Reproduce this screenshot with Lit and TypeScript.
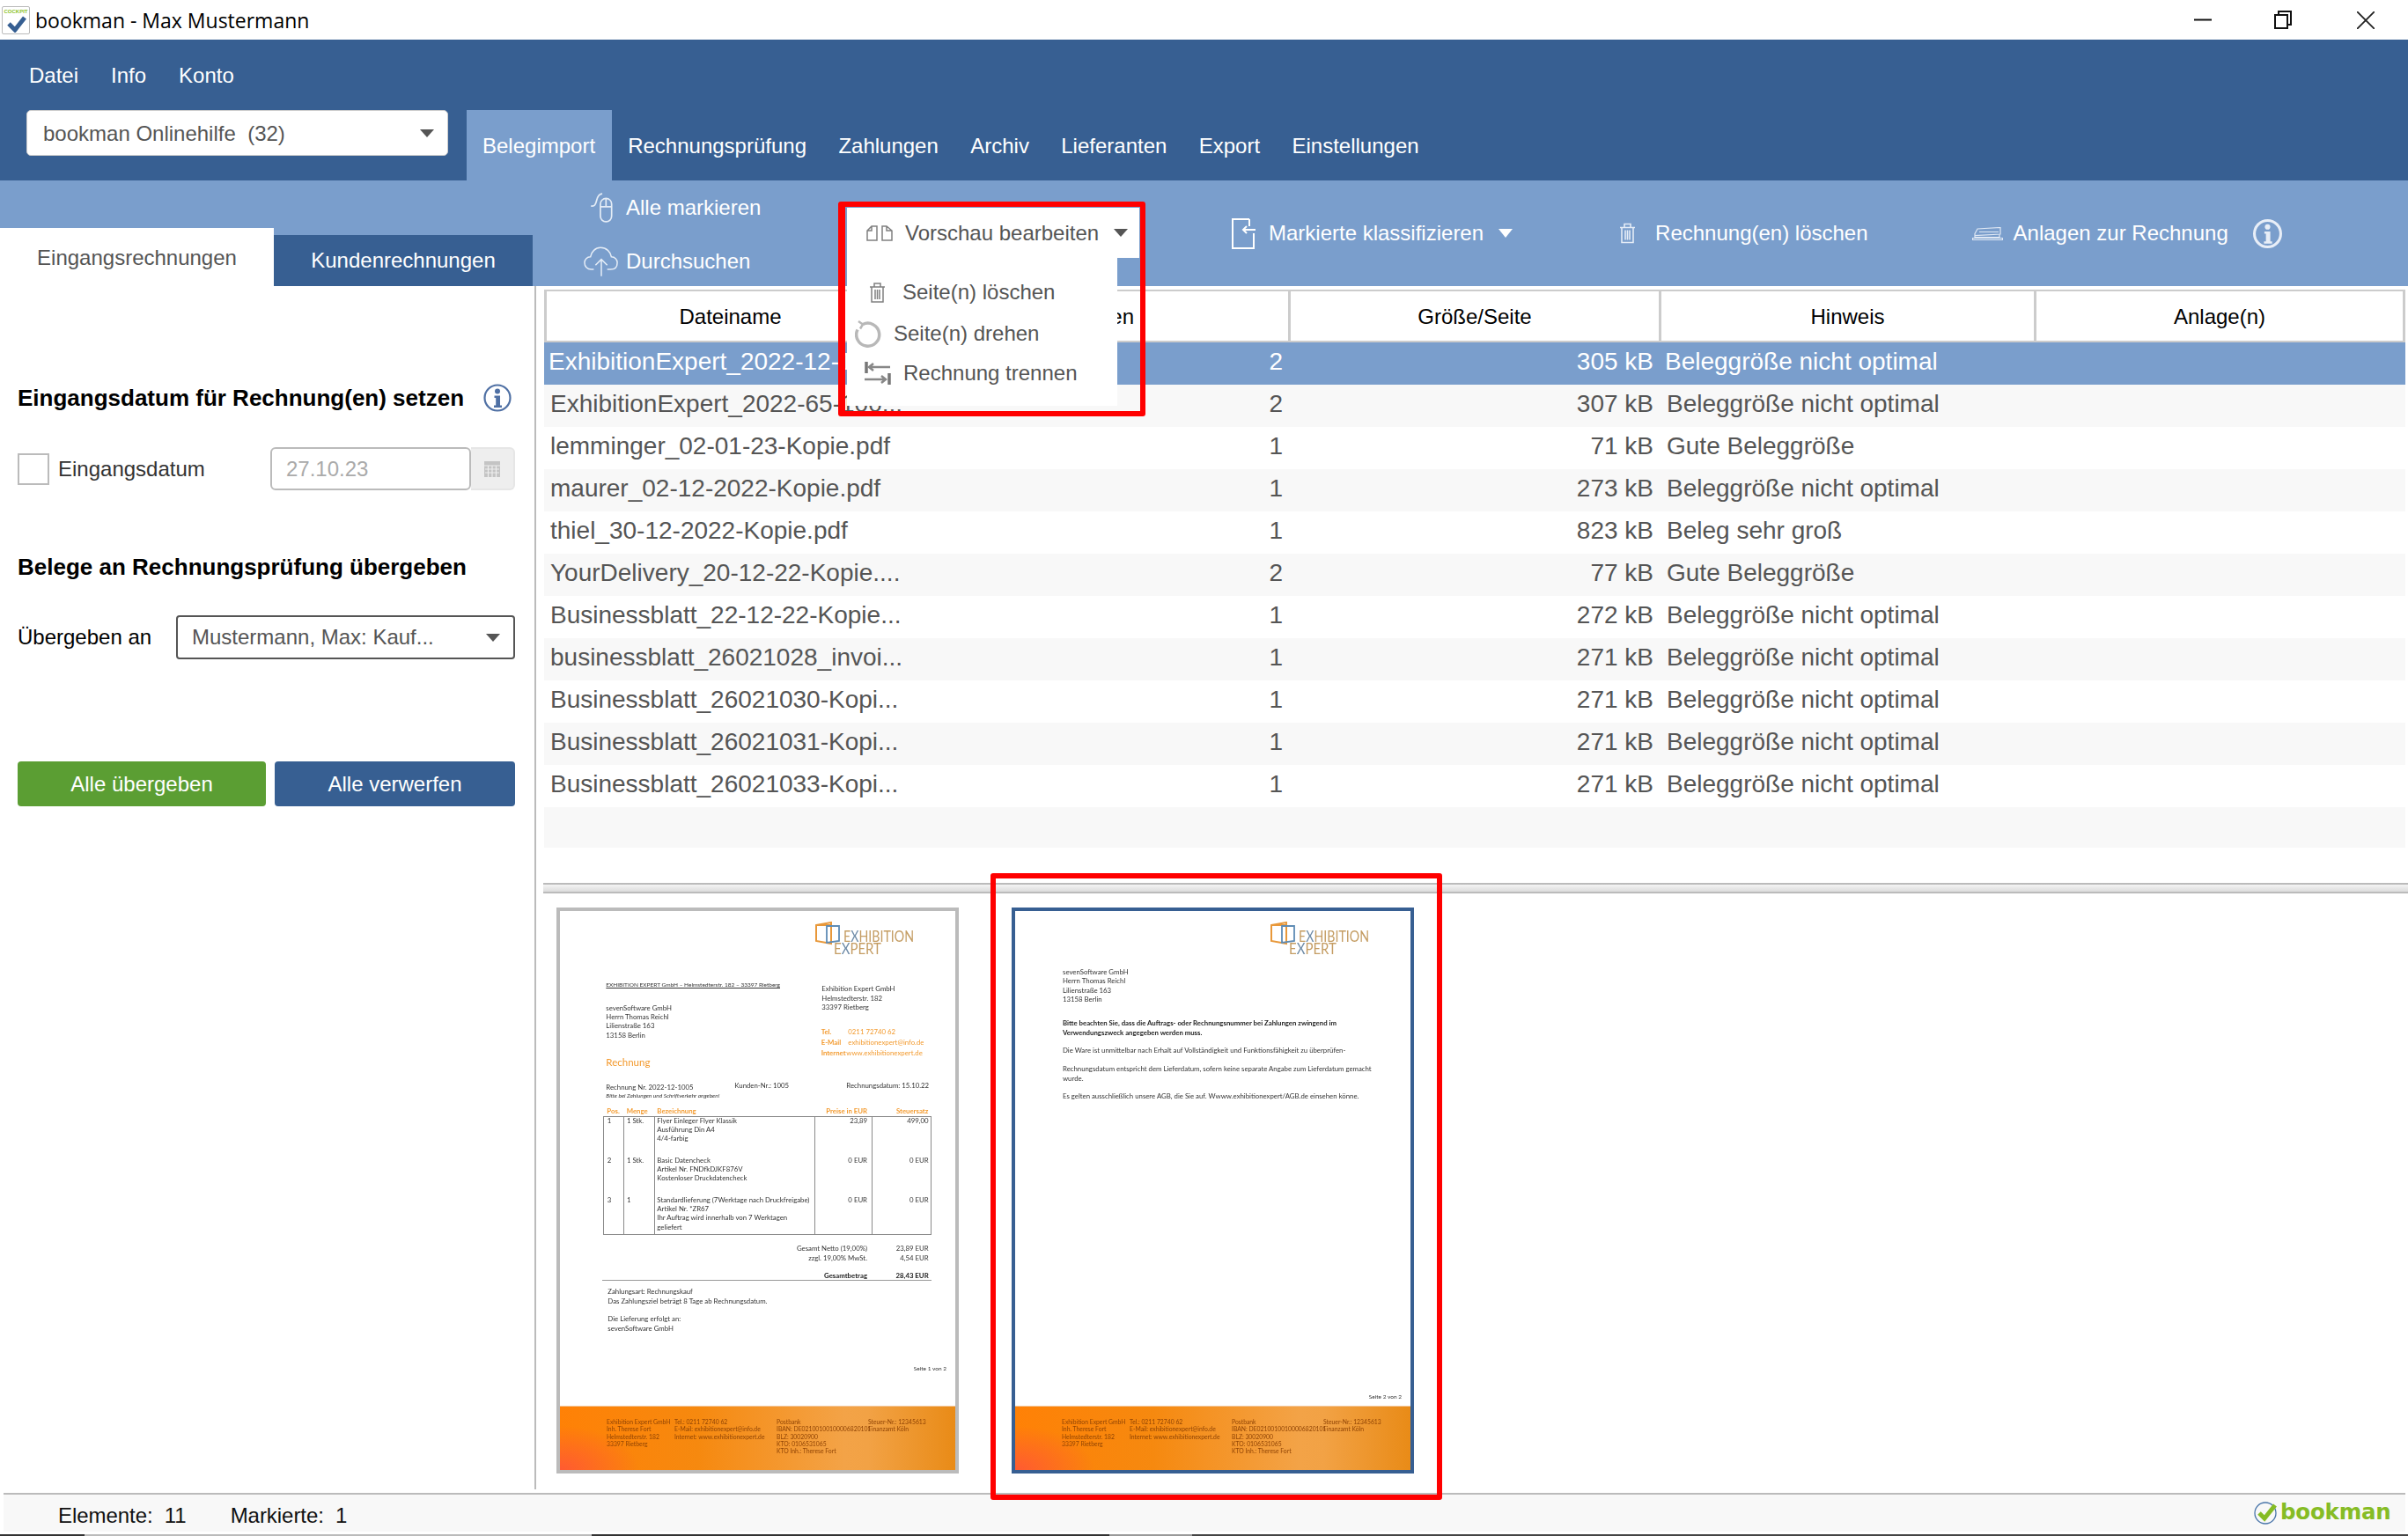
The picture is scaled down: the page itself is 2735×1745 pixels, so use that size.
import { LitElement, html, css, svg, nothing } from "lit";
import { customElement } from "lit/decorators.js";

const rows = [
  ["ExhibitionExpert_2022-12-100...", "2", "305 kB", "Beleggröße nicht optimal"],
  ["ExhibitionExpert_2022-65-100...", "2", "307 kB", "Beleggröße nicht optimal"],
  ["lemminger_02-01-23-Kopie.pdf", "1", "71 kB", "Gute Beleggröße"],
  ["maurer_02-12-2022-Kopie.pdf", "1", "273 kB", "Beleggröße nicht optimal"],
  ["thiel_30-12-2022-Kopie.pdf", "1", "823 kB", "Beleg sehr groß"],
  ["YourDelivery_20-12-22-Kopie....", "2", "77 kB", "Gute Beleggröße"],
  ["Businessblatt_22-12-22-Kopie...", "1", "272 kB", "Beleggröße nicht optimal"],
  ["businessblatt_26021028_invoi...", "1", "271 kB", "Beleggröße nicht optimal"],
  ["Businessblatt_26021030-Kopi...", "1", "271 kB", "Beleggröße nicht optimal"],
  ["Businessblatt_26021031-Kopi...", "1", "271 kB", "Beleggröße nicht optimal"],
  ["Businessblatt_26021033-Kopi...", "1", "271 kB", "Beleggröße nicht optimal"],
];

type L = { x: number; y: number; t: string; c?: string; right?: boolean };
const z = (x: number, y: number, t: string, c = "", right = false): L => ({
  x: x / 3 - 16,
  y: y / 3 - 15,
  t,
  c,
  right,
});

const footerCols: [number, string[]][] = [
  [53, ["Exhibition Expert GmbH", "Inh. Therese Fort", "Helmstedterstr. 182", "33397 Rietberg"]],
  [130, ["Tel.: 0211 72740 62", "E-Mail: exhibitionexpert@info.de", "Internet: www.exhibitionexpert.de"]],
  [246, ["Postbank", "IBAN: DE02100100100006820101", "BLZ: 30020900", "KTO: 0106531065", "KTO Inh.: Therese Fort"]],
  [350, ["Steuer-Nr.: 12345613", "Finanzamt Köln"]],
];

const page1: L[] = [
  z(205, 297, "EXHIBITION EXPERT GmbH – Helmstedterstr. 182 – 33397 Rietberg", "tiny u"),
  z(940, 310, "Exhibition Expert GmbH"),
  z(940, 341, "Helmstedterstr. 182"),
  z(940, 372, "33397 Rietberg"),
  z(938, 456, "Tel.", "or b"),
  z(1030, 456, "0211 72740 62", "or"),
  z(938, 491, "E-Mail", "or b"),
  z(1030, 491, "exhibitionexpert@info.de", "or"),
  z(938, 527, "Internet", "or b"),
  z(1024, 527, "www.exhibitionexpert.de", "or"),
  z(205, 374, "sevenSoftware GmbH"),
  z(205, 405, "Herrn Thomas Reichl"),
  z(205, 436, "Lilienstraße 163"),
  z(205, 467, "13158 Berlin"),
  z(205, 561, "Rechnung", "or big"),
  z(205, 645, "Rechnung Nr. 2022-12-1005"),
  z(643, 640, "Kunden-Nr.: 1005"),
  z(1024, 640, "Rechnungsdatum: 15.10.22"),
  z(205, 676, "Bitte bei Zahlungen und Schriftverkehr angeben!", "tiny i"),
  z(208, 726, "Pos.", "or b"),
  z(275, 726, "Menge", "or b"),
  z(379, 726, "Bezeichnung", "or b"),
  z(1095, 726, "Preise in EUR", "or b", true),
  z(1303, 726, "Steuersatz", "or b", true),
  z(209, 759, "1"),
  z(276, 759, "1 Stk."),
  z(379, 759, "Flyer Einleger Flyer Klassik"),
  z(379, 790, "Ausführung Din A4"),
  z(379, 820, "4/4-farbig"),
  z(1095, 759, "23,89", "", true),
  z(1304, 759, "499,00", "", true),
  z(209, 893, "2"),
  z(276, 893, "1 Stk."),
  z(379, 893, "Basic Datencheck"),
  z(379, 924, "Artikel Nr. FNDfkDJKF876V"),
  z(379, 955, "Kostenloser Druckdatencheck"),
  z(1095, 893, "0 EUR", "", true),
  z(1304, 893, "0 EUR", "", true),
  z(209, 1028, "3"),
  z(276, 1028, "1"),
  z(379, 1028, "Standardlieferung (7Werktage nach Druckfreigabe)"),
  z(379, 1059, "Artikel Nr. *ZR67"),
  z(379, 1090, "Ihr Auftrag wird innerhalb von 7 Werktagen"),
  z(379, 1121, "geliefert"),
  z(1095, 1028, "0 EUR", "", true),
  z(1304, 1028, "0 EUR", "", true),
  z(1095, 1194, "Gesamt Netto (19,00%)", "", true),
  z(1304, 1194, "23,89 EUR", "", true),
  z(1095, 1226, "zzgl. 19,00% MwSt.", "", true),
  z(1304, 1226, "4,54 EUR", "", true),
  z(1095, 1287, "Gesamtbetrag", "b", true),
  z(1304, 1287, "28,43 EUR", "b", true),
  z(211, 1342, "Zahlungsart: Rechnungskauf"),
  z(211, 1373, "Das Zahlungsziel beträgt 8 Tage ab Rechnungsdatum."),
  z(211, 1435, "Die Lieferung erfolgt an:"),
  z(211, 1466, "sevenSoftware GmbH"),
  z(1365, 1605, "Seite 1 von 2", "tiny", true),
];

const page2: L[] = [
  { x: 54, y: 69, t: "sevenSoftware GmbH" },
  { x: 54, y: 79, t: "Herrn Thomas Reichl" },
  { x: 54, y: 90, t: "Lilienstraße 163" },
  { x: 54, y: 100, t: "13158 Berlin" },
  { x: 54, y: 127, t: "Bitte beachten Sie, dass die Auftrags- oder Rechnungsnummer bei Zahlungen zwingend im", c: "b" },
  { x: 54, y: 138, t: "Verwendungszweck angegeben werden muss.", c: "b" },
  { x: 54, y: 158, t: "Die Ware ist unmittelbar nach Erhalt auf Vollständigkeit und Funktionsfähigkeit zu überprüfen-" },
  { x: 54, y: 179, t: "Rechnungsdatum entspricht dem Lieferdatum, sofern keine separate Angabe zum Lieferdatum gemacht" },
  { x: 54, y: 190, t: "wurde." },
  { x: 54, y: 210, t: "Es gelten ausschließlich unsere AGB, die Sie auf. Wwww.exhibitionexpert/AGB.de einsehen könne." },
  { x: 439, y: 552, t: "Seite 2 von 2", c: "tiny", right: true },
];

const ic = {
  mouse: svg`<path d="M1 14c4 1 5-2 6-6s3-7 6-7" /><rect x="11" y="6" width="12" height="25" rx="6"/><path d="M11 15h12M17 6v9"/>`,
  cloud: svg`<path d="M12 28H9C4 28 1 24 1 20s3-7 7-7c1-6 6-11 12-11 7 0 12 5 13 11 4 0 7 3 7 7 0 5-3 8-8 8h-4"/><path d="M21 36V17M14 23l7-7 7 7"/>`,
  pages: svg`<path d="M6 1h6v16H1V6zM6 1v5H1M18 1h5l6 5v11H18zM23 1v5h6"/>`,
  trash: svg`<path d="M1 5h17M6 5V1h7v4M3 5v17h13V5M7 8v11M9.500 8v11M12 8v11"/>`,
  file: svg`<path d="M20 1H1v33h24V17M20 1v8"/><path d="M27 13H13M17 9l-4 4 4 4"/>`,
  stapler: svg`<path d="M3 7.500 6 2 32 .5V8L3 9.500zM3 9.500V11.500H31V8M.5 12.500H34.500V14.500H.5zM8 5.500H30"/>`,
};

@customElement("doc-page")
export class DocPage extends LitElement {
  static properties = { lines: { attribute: false }, table: { type: Boolean }, selected: { type: Boolean } };
  lines: L[] = [];
  table = false;
  selected = false;
  static styles = css`
    :host { display: block; }
    .page { box-sizing: border-box; width: 457px; height: 643px; border: 4px solid #bbb; background: #fff; position: relative; overflow: hidden; font-family: Lato, sans-serif; font-size: 7.800px; line-height: 10px; color: #333; }
    .page.sel { border-color: #375f92; }
    .soft { position: absolute; inset: 0; filter: blur(.35px); }
    .ln { position: absolute; white-space: nowrap; transform: translateY(-5px); }
    .ln.r { transform: translate(-100%, -5px); }
    .tiny { font-size: 6.500px; }
    .u { text-decoration: underline; }
    .i { font-style: italic; }
    .b { font-weight: 700; color: #222; }
    .or { color: #f39a2e; }
    .big { font-size: 11.500px; }
    .logo { position: absolute; left: 290px; top: 12px; width: 130px; height: 44px; }
    .box { position: absolute; left: 49px; top: 232.500px; width: 373px; height: 135px; box-sizing: border-box; border: 1px solid #8a8a8a; display: grid; grid-template-columns: 22px 35px 182px 65px 1fr; }
    .box div + div { border-left: 1px solid #8a8a8a; }
    .rule { position: absolute; left: 48px; top: 419px; width: 374px; height: 1px; background: #999; }
    .foot { position: absolute; left: 0; right: 0; top: 562px; bottom: 0; border-top: 1px solid #f4c79a; background: radial-gradient(90px 50px at 0 100%, #ff5a32 0, rgba(255,90,50,0) 100%), linear-gradient(90deg, #ff8106 0, #f6890f 35%, #f3a347 72%, #f2a245 78%, #e98b17 100%); color: #8f4304; font-size: 6.800px; line-height: 8.300px; }
    .col { position: absolute; top: 13px; white-space: nowrap; }
  `;
  render() {
    return html`<div class="page ${this.selected ? "sel" : ""}">
      <div class="soft">
      <svg class="logo" viewBox="0 0 130 44" aria-hidden="true">
        <path d="M1 4 18 1v24L1 22z M1 4h16" fill="none" stroke="#e8983a" stroke-width="2"/>
        <path d="M13 5h14v17l-14 2z" fill="none" stroke="#5f8cb5" stroke-width="1.800"/>
        <text x="32" y="23" font-family="Lato" font-size="17" fill="#c49c62" textLength="80" lengthAdjust="spacingAndGlyphs">E<tspan fill="#6f8ca8">X</tspan>HIBITION</text>
        <text x="21" y="37" font-family="Lato" font-size="17" fill="#c49c62" textLength="54" lengthAdjust="spacingAndGlyphs">E<tspan fill="#6f8ca8">X</tspan>PERT</text>
      </svg>
      ${this.table
        ? html`<div class="box"><div></div><div></div><div></div><div></div><div></div></div><div class="rule"></div>`
        : nothing}
      ${this.lines.map(
        (l) => html`<span class="ln ${l.c || ""} ${l.right ? "r" : ""}" style="left:${l.x}px;top:${l.y}px">${l.t}</span>`
      )}
      <div class="foot">
        ${footerCols.map(
          ([x, ls]) => html`<div class="col" style="left:${x}px">${ls.map((s) => html`<div>${s}</div>`)}</div>`
        )}
      </div>
      </div>
    </div>`;
  }
}

@customElement("app-root")
export class AppRoot extends LitElement {
  static styles = css`
    :host { display: block; width: 2735px; height: 1745px; position: relative; overflow: hidden; background: #fff; font-family: "Liberation Sans", Arial, sans-serif; font-size: 24px; color: #555; }
    .app { display: flex; flex-direction: column; height: 1745px; }
    svg { display: block; flex: none; }
    .line { fill: none; stroke: currentColor; stroke-width: 2; }
    .thin { fill: none; stroke: #dfe8f4; stroke-width: 1.200; }
    .soft { fill: none; stroke: #e4ecf6; stroke-width: 1.600; }
    .gray { fill: none; stroke: #808080; stroke-width: 1.500; }

    .title { height: 45px; flex: none; display: flex; align-items: center; background: #fff; color: #000; }
    .winicon { width: 32px; height: 32px; margin-left: 2px; box-sizing: border-box; border: 1px solid #bbb; border-radius: 2px; position: relative; }
    .cockpit { position: absolute; left: 0; right: 0; top: 2px; text-align: center; font: 700 6px/7px "Liberation Sans", sans-serif; color: #8cc21f; }
    .winicon svg { position: absolute; left: 5px; top: 9px; }
    .title-text { margin-left: 6px; font: 23px/30px "Open Sans", sans-serif; flex: 1; }
    .wbtns { display: flex; align-items: center; color: #111; }
    .wmin { margin-right: 71px; }
    .wres { margin-right: 74px; }
    .wcl { margin-right: 38px; }

    .head { height: 160px; flex: none; box-sizing: border-box; background: #375f92; color: #fff; position: relative; }
    .menu { display: flex; height: 80px; padding: 2px 0 0 33px; gap: 37px; align-items: center; box-sizing: border-box; }
    .nav { display: flex; height: 80px; padding-left: 30px; }
    .combo { box-sizing: border-box; width: 479px; height: 52px; background: #fff; border: 1px solid #ccc; border-radius: 5px; color: #555; display: flex; align-items: center; justify-content: space-between; padding: 1px 15px 0 18px; white-space: pre; }
    .tri { width: 0; height: 0; border-left: 8px solid transparent; border-right: 8px solid transparent; border-top: 9px solid #555; flex: none; }
    .tabs { display: flex; margin-left: 21px; }
    .tab { height: 80px; display: flex; align-items: center; padding: 2px 18.200px 0; white-space: nowrap; box-sizing: border-box; }
    .tab.on { background: #7a9ecc; width: 165px; padding: 2px 18px 0; }

    .tool { height: 120px; flex: none; background: #7a9ecc; color: #fff; display: flex; position: relative; }
    .lefttabs { width: 659px; flex: none; display: flex; align-items: flex-end; }
    .lt { box-sizing: border-box; display: flex; align-items: center; justify-content: center; white-space: nowrap; }
    .lt.a { width: 311px; height: 66px; background: #fff; color: #555; padding-top: 2px; }
    .lt.b { width: 294px; height: 58px; background: #375f92; color: #fff; }
    .stack { width: 220px; flex: none; position: relative; }
    .ti { display: flex; align-items: center; white-space: nowrap; }
    .stack .ti { height: 60px; }
    .stack .ico { width: 48px; margin-right: 4px; display: flex; justify-content: center; }
    .stack .ti:first-child { height: 62px; }
    .tools { display: flex; align-items: center; }
    .t1 { margin-left: 520px; }
    .t2 { margin-left: 121px; }
    .t3 { margin-left: 118px; }
    .t1 svg { margin-right: 14px; }
    .t2 svg { margin-right: 22px; }
    .t3 svg { margin-right: 12px; }
    .wtri { width: 0; height: 0; border-left: 8px solid transparent; border-right: 8px solid transparent; border-top: 10px solid #fff; margin-left: 17px; }
    .info-w { margin-left: 28px; }

    .body { flex: 1; min-height: 0; display: flex; }
    .side { width: 609px; box-sizing: border-box; flex: none; border-right: 2px solid #bbb; padding: 107px 22px 0 20px; color: #000; height: 1367px; }
    .h { font-weight: 700; font-size: 26px; line-height: 40px; color: #000; display: flex; align-items: center; white-space: nowrap; }
    .h svg { margin-left: 22px; }
    .r1 { display: flex; align-items: center; height: 49px; margin-top: 36px; }
    .cb { box-sizing: border-box; width: 36px; height: 36px; border: 2px solid #bbb; background: #fff; flex: none; }
    .r1 .lab { margin-left: 10px; color: #333; width: 241px; flex: none; }
    .date { box-sizing: border-box; width: 228px; height: 49px; border: 2px solid #bbb; border-radius: 6px; color: #aaa; display: flex; align-items: center; padding-left: 16px; background: #fff; }
    .cal { box-sizing: border-box; width: 50px; height: 49px; background: #eee; border: 2px solid #e6e6e6; border-left: 0; border-radius: 0 6px 6px 0; display: flex; align-items: center; justify-content: center; }
    .h2 { margin-top: 67px; }
    .r2 { display: flex; align-items: center; height: 50px; margin-top: 35px; }
    .r2 .lab { width: 180px; flex: none; color: #000; }
    .sel { box-sizing: border-box; width: 385px; height: 50px; border: 2px solid #555; border-radius: 4px; color: #555; display: flex; align-items: center; justify-content: space-between; padding: 0 15px 0 16px; }
    .btns { display: flex; gap: 10px; margin-top: 116px; }
    .btn { height: 51px; border-radius: 4px; color: #fff; display: flex; align-items: center; justify-content: center; box-sizing: border-box; }
    .green { width: 282px; background: #5b9e33; }
    .blue { width: 273px; background: #375f92; }

    .main { flex: 1; min-width: 0; display: flex; flex-direction: column; height: 1367px; }
    .table { margin: 4px 3px 0 9px; height: 674px; flex: none; font-size: 28px; }
    .gr { display: grid; grid-template-columns: 424px 421px 421px 426px 422px; }
    .thead { height: 60px; box-sizing: border-box; border: solid #ccc; border-width: 2px 0; color: #000; font-size: 24px; }
    .thead div { display: flex; align-items: center; justify-content: center; border-left: 3px solid #ccc; box-sizing: border-box; padding-top: 1px; }
    .thead div:first-child { padding-right: 4px; }
    .thead div:last-child { border-right: 3px solid #ccc; }
    .row { height: 48px; line-height: 44px; white-space: nowrap; color: #555; background: #fff; position: relative; }
    .row.alt { background: #f8f8f8; }
    .row.on { background: #7a9ecc; color: #fff; }
    .row .n { padding-left: 7px; }
    .row.on .n { padding-left: 5px; }
    .row .p { text-align: right; padding-right: 6px; }
    .row .s { text-align: right; padding-right: 6px; }
    .row .h3 { padding-left: 9px; }
    .row.on .h3 { padding-left: 7px; }
    .row.last { height: 46px; }
    .split { flex: none; height: 12px; box-sizing: border-box; margin-left: 8px; border: solid #bbb; border-width: 2px 0; background: linear-gradient(#f4f4f4, #dcdcdc); }
    .thumbs { flex: 1; display: flex; padding: 16px 0 0 23px; gap: 60px; min-height: 0; }

    .status { position: absolute; left: 4px; right: 3px; top: 1696px; height: 44px; box-sizing: border-box; border-top: 2px solid #bbb; background: #f8f8f8; color: #111; display: flex; align-items: center; padding: 6px 0 0 62px; white-space: pre; }
    .status span + span { margin-left: 50px; }
    .status span { letter-spacing: -.05px; }
    .brand { position: absolute; left: 2556px; top: 4px; display: flex; align-items: center; font: 700 24.500px/32px "DejaVu Sans", sans-serif; color: #86bc25; letter-spacing: -.2px; }
    .brand svg { margin-right: 2px; }
    .bottom { position: absolute; left: 0; right: 0; top: 1743px; height: 2px; background: linear-gradient(90deg, #333 0 96px, #bbb 96px 672px, #333 672px 1260px, #999 1260px 1354px, #444 1354px); }

    .overlay { position: absolute; z-index: 5; background: #fff; }
    .vor { left: 962px; top: 236px; width: 332px; height: 57px; display: flex; align-items: center; color: #555; padding-left: 22px; box-sizing: border-box; white-space: nowrap; }
    .vor svg { margin-right: 14px; }
    .vor .tri { margin-left: 17px; }
    .drop { left: 962px; top: 293px; width: 307px; height: 168px; color: #555; box-sizing: border-box; white-space: nowrap; }
    .mi { position: absolute; display: flex; align-items: center; height: 46px; }
    .m1 { left: 25px; top: 16px; }
    .m2 { left: 9px; top: 63px; }
    .m3 { left: 20px; top: 108px; }
    .m1 svg { margin-right: 19px; }
    .m2 svg { margin-right: 13px; }
    .m3 svg { margin-right: 14px; }
    .red { position: absolute; z-index: 6; box-sizing: border-box; border: 6.500px solid #f00; border-radius: 3px; pointer-events: none; }
    .red.a { left: 952px; top: 229px; width: 349px; height: 244px; border-left-width: 8px; }
    .red.b { left: 1125px; top: 992px; width: 513px; height: 712px; }
  `;

  info(color: string, size = 32, sw = 2.5) {
    return svg`<svg width="${size}" height="${size}" viewBox="0 0 32 32" aria-hidden="true">
      <circle cx="16" cy="16" r="14.500" fill="none" stroke="${color}" stroke-width="${sw}"/>
      <circle cx="16" cy="8.500" r="3" fill="${color}"/>
      <path d="M12.500 13.500h6.500v11h2v2.500h-9v-2.500h2.200v-8.500h-1.700z" fill="${color}"/>
    </svg>`;
  }

  render() {
    return html`<div class="app">
      <div class="title">
        <div class="winicon">
          <div class="cockpit">COCKPIT</div>
          <svg width="22" height="20" viewBox="0 0 22 20" aria-hidden="true"><path d="M2 10l7 7L20 3" fill="none" stroke="#365f92" stroke-width="5"/></svg>
        </div>
        <div class="title-text">bookman - Max Mustermann</div>
        <div class="wbtns">
          <svg class="wmin" width="20" height="3" viewBox="0 0 20 3" aria-hidden="true"><rect width="20" height="2" y=".5" fill="#111"/></svg>
          <svg class="wres" width="20" height="21" viewBox="0 0 20 21" aria-hidden="true"><path d="M5 5V1h14v15h-4M1 5h14v15H1z" fill="none" stroke="#111" stroke-width="2"/></svg>
          <svg class="wcl" width="20" height="20" viewBox="0 0 20 20" aria-hidden="true"><path d="M0 0l20 20M20 0L0 20" stroke="#222" stroke-width="1.800"/></svg>
        </div>
      </div>

      <div class="head">
        <div class="menu"><span>Datei</span><span>Info</span><span>Konto</span></div>
        <div class="nav">
          <div class="combo">bookman Onlinehilfe  (32)<i class="tri"></i></div>
          <div class="tabs">
            <div class="tab on">Belegimport</div>
            ${["Rechnungsprüfung", "Zahlungen", "Archiv", "Lieferanten", "Export", "Einstellungen"].map(
              (t) => html`<div class="tab">${t}</div>`
            )}
          </div>
        </div>
      </div>

      <div class="tool">
        <div class="lefttabs">
          <div class="lt a">Eingangsrechnungen</div>
          <div class="lt b">Kundenrechnungen</div>
        </div>
        <div class="stack">
          <div class="ti"><span class="ico"><svg class="soft" width="28" height="34" viewBox="0 0 24 32" aria-hidden="true">${ic.mouse}</svg></span>Alle markieren</div>
          <div class="ti"><span class="ico"><svg class="soft" width="40" height="36" viewBox="0 0 42 37" aria-hidden="true">${ic.cloud}</svg></span>Durchsuchen</div>
        </div>
        <div class="tools">
          <div class="ti t1"><svg class="line" width="28" height="35" viewBox="0 0 28 35" aria-hidden="true">${ic.file}</svg>Markierte klassifizieren<i class="wtri"></i></div>
          <div class="ti t2"><svg class="soft" width="19" height="24" viewBox="0 0 19 23" aria-hidden="true">${ic.trash}</svg>Rechnung(en) löschen</div>
          <div class="ti t3"><svg class="thin" width="35" height="15" viewBox="0 0 35 15" aria-hidden="true">${ic.stapler}</svg>Anlagen zur Rechnung<span class="info-w">${this.info("#e8eef7", 33, 3)}</span></div>
        </div>
      </div>

      <div class="body">
        <div class="side">
          <div class="h">Eingangsdatum für Rechnung(en) setzen${this.info("#4f70a4", 32, 2.2)}</div>
          <div class="r1">
            <div class="cb"></div><div class="lab">Eingangsdatum</div>
            <div class="date">27.10.23</div>
            <div class="cal"><svg width="18" height="18" viewBox="0 0 18 18" aria-hidden="true"><rect width="18" height="18" fill="#c4c4c4"/><path d="M0 5h18M1 9h16M1 13h16M4.500 5v13M9 5v13M13.500 5v13" stroke="#eee" stroke-width="1.200"/></svg></div>
          </div>
          <div class="h h2">Belege an Rechnungsprüfung übergeben</div>
          <div class="r2"><div class="lab">Übergeben an</div><div class="sel">Mustermann, Max: Kauf...<i class="tri"></i></div></div>
          <div class="btns"><div class="btn green">Alle übergeben</div><div class="btn blue">Alle verwerfen</div></div>
        </div>
        <div class="main">
          <div class="table">
            <div class="gr thead"><div>Dateiname</div><div>Seiten</div><div>Größe/Seite</div><div>Hinweis</div><div>Anlage(n)</div></div>
            ${rows.map(
              (r, i) => html`<div class="gr row ${i === 0 ? "on" : i % 2 ? "alt" : ""}">
                <div class="n">${r[0]}</div><div class="p">${r[1]}</div><div class="s">${r[2]}</div><div class="h3">${r[3]}</div><div></div>
              </div>`
            )}
            <div class="row alt last"></div>
          </div>
          <div class="split"></div>
          <div class="thumbs">
            <doc-page .lines=${page1} table></doc-page>
            <doc-page .lines=${page2} selected></doc-page>
          </div>
        </div>
      </div>
    </div>

    <div class="status">
      <span>Elemente:  11</span><span>Markierte:  1</span>
      <div class="brand"><svg width="28" height="27" viewBox="0 0 28 27" aria-hidden="true"><circle cx="13" cy="14" r="12" fill="none" stroke="#4a76aa" stroke-width="1.300"/><path d="M6 14l6 6L24 5" fill="none" stroke="#86bc25" stroke-width="5"/></svg>bookman</div>
    </div>
    <div class="bottom"></div>

    <div class="overlay vor">
      <svg class="gray" width="30" height="18" viewBox="0 0 30 18" aria-hidden="true">${ic.pages}</svg>
      Vorschau bearbeiten<i class="tri"></i>
    </div>
    <div class="overlay drop">
      <div class="mi m1"><svg class="gray" width="19" height="23" viewBox="0 0 19 23" aria-hidden="true">${ic.trash}</svg>Seite(n) löschen</div>
      <div class="mi m2"><svg width="31" height="31" viewBox="0 0 31 31" aria-hidden="true"><path d="M9 4.500a13 13 0 1 1-6 6" fill="none" stroke="#b8b8b8" stroke-width="3.500"/><path d="M4 1l5 3.500-3 5" fill="none" stroke="#b8b8b8" stroke-width="2.500"/></svg>Seite(n) drehen</div>
      <div class="mi m3"><svg width="30" height="28" viewBox="0 0 30 28" aria-hidden="true"><path d="M2 1v13M28 14v13" stroke="#777" stroke-width="3.500"/><path d="M29 7H5M10 3 5 7l5 4M0 21h24M19 17l5 4-5 4" fill="none" stroke="#888" stroke-width="2.500"/></svg>Rechnung trennen</div>
    </div>
    <div class="red a"></div>
    <div class="red b"></div>`;
  }
}
